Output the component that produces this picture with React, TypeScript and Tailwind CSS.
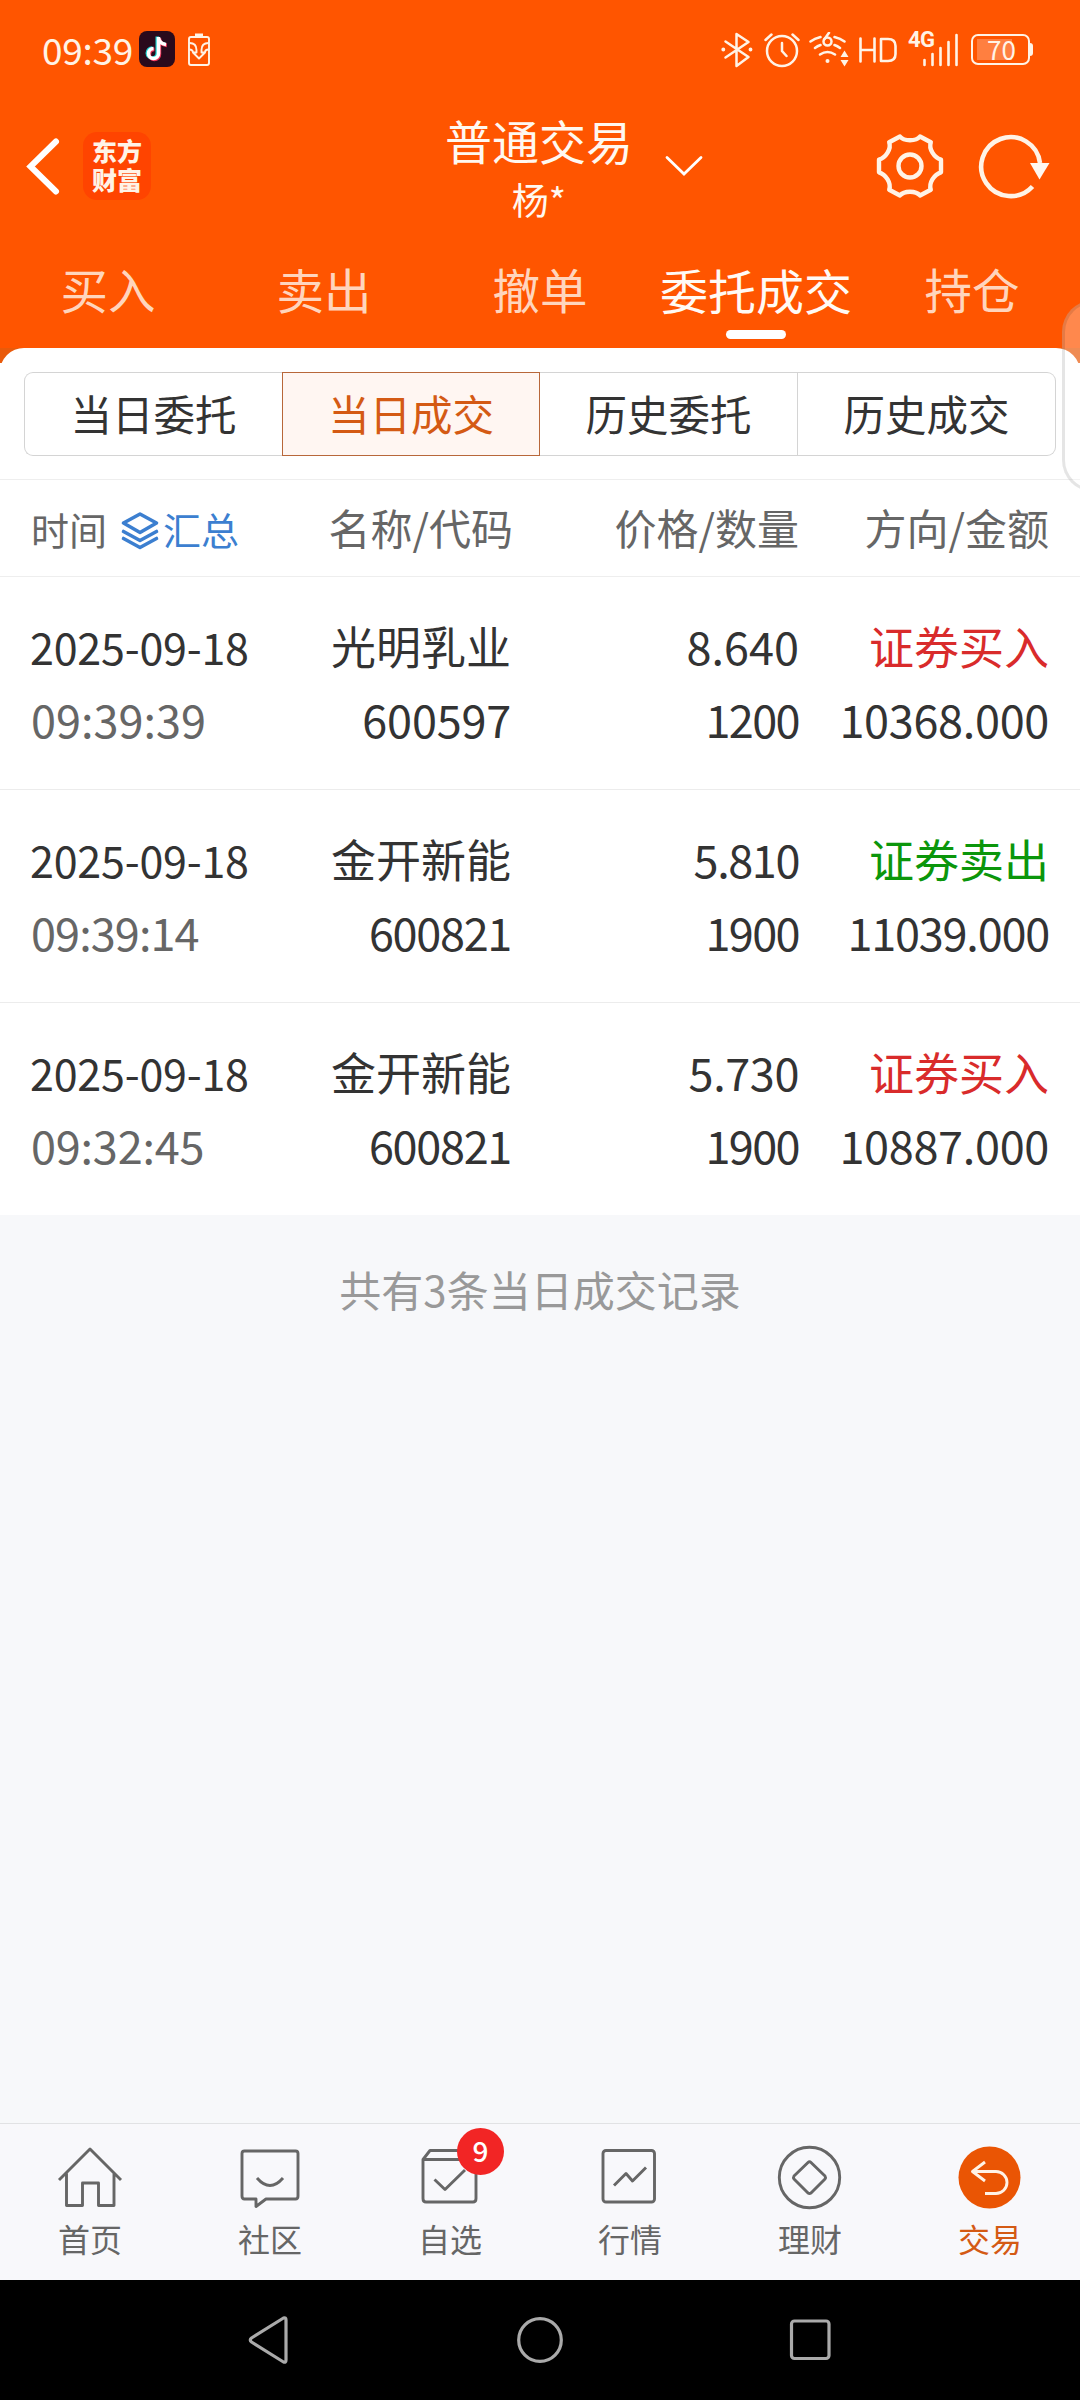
import React from "react";

const records = [
  { date: "2025-09-18", time: "09:39:39", timeTrack: "", name: "光明乳业", code: "600597", codeTrack: "tracking-[-0.2px]", price: "8.640", priceTrack: "", qty: "1200", side: "证券买入", amount: "10368.000", amountTrack: "tracking-[-0.3px]", tone: "text-[#d92b2b]" },
  { date: "2025-09-18", time: "09:39:14", timeTrack: "tracking-[-0.9px]", name: "金开新能", code: "600821", codeTrack: "tracking-[-1.3px]", price: "5.810", priceTrack: "tracking-[-1.4px]", qty: "1900", side: "证券卖出", amount: "11039.000", amountTrack: "tracking-[-1.2px]", tone: "text-[#0b960b]" },
  { date: "2025-09-18", time: "09:32:45", timeTrack: "tracking-[-0.2px]", name: "金开新能", code: "600821", codeTrack: "tracking-[-1.3px]", price: "5.730", priceTrack: "tracking-[-0.4px]", qty: "1900", side: "证券买入", amount: "10887.000", amountTrack: "tracking-[-0.3px]", tone: "text-[#d92b2b]" },
];

const tabs = ["买入", "卖出", "撤单", "委托成交", "持仓"];
const segments = ["当日委托", "当日成交", "历史委托", "历史成交"];

function StatusBar() {
  return (
    <div className="flex h-[100px] items-center pl-[42px] pr-[47px] text-[#fff3e6]">
      <span className="-mt-[3px] w-[97px] whitespace-nowrap text-[37px] leading-[40px] tracking-[-0.3px]">09:39</span>
      <svg className="-mt-[2px] h-9 w-9" viewBox="0 0 36 36">
        <rect width="36" height="36" rx="8" fill="#2a0a1c" />
        <g fill="none" strokeWidth="3.600">
          <path d="M19.500 6V22.500a5 5 0 1 1-5-5M19.500 7c.8 4 3.500 6 7.500 6.500" stroke="#20d5d2" transform="translate(-1.200 -.5)" />
          <path d="M19.500 6V22.500a5 5 0 1 1-5-5M19.500 7c.8 4 3.500 6 7.500 6.500" stroke="#f0365c" transform="translate(.9 .9)" />
          <path d="M19.500 6V22.500a5 5 0 1 1-5-5M19.500 7c.8 4 3.500 6 7.500 6.500" stroke="#fff" />
        </g>
      </svg>
      <svg className="-mt-[1px] ml-3 h-[34px] w-6" viewBox="0 0 24 34" fill="none" stroke="currentColor" strokeWidth="1.900">
        <rect x="2" y="4" width="20" height="28" rx="2" />
        <path d="M8 2h8" strokeWidth="3" />
        <path d="M2.500 10c5 0 7 2.500 7 7v2.500H6l6 6 6-6h-3.500V17c0-4.500 2-7 7-7M2.500 16.500c2 0 3.500 1 3.500 3M21.500 16.500c-2 0-3.500 1-3.500 3" strokeLinejoin="round" />
      </svg>

      <svg className="ml-auto h-9 w-8" viewBox="0 0 32 36" fill="none" stroke="currentColor" strokeWidth="2.500" strokeLinejoin="round" strokeLinecap="round">
        <path d="M4.500 9.500L27.500 25 15.500 34V2l12 8L4.500 25.500" />
        <circle cx="2.300" cy="17.500" r="1.200" fill="currentColor" strokeWidth="1.500" />
        <circle cx="29.500" cy="17.500" r="1.200" fill="currentColor" strokeWidth="1.500" />
      </svg>
      <svg className="ml-[11px] h-9 w-9" viewBox="0 0 36 36" fill="none" stroke="currentColor" strokeWidth="2.500" strokeLinecap="round">
        <circle cx="18" cy="19" r="15" />
        <path d="M18 11v8l4.500 5M1.500 8l6-5.500M34.500 8l-6-5.500" />
      </svg>
      <svg className="ml-[9px] h-9 w-10" viewBox="0 0 40 36" fill="none" stroke="currentColor" strokeWidth="2.500" strokeLinecap="round">
        <path d="M1.500 9.500q4-3 10-4.500M35.500 9.500q-4-3-10-4.500M6 16q2.500-2 5.500-3M31 16q-2.500-2-5.500-3M11 22.500q7.500-5 15 0" />
        <circle cx="18.500" cy="9.500" r="4" />
        <path d="M15.200 7.500L20 0.800" />
        <circle cx="18.500" cy="29" r="2" fill="currentColor" stroke="none" />
        <path d="M31.500 25l4-6.500 4 6.500zM31.500 28l4 6.500 4-6.500z" fill="currentColor" stroke="none" />
      </svg>
      <svg className="ml-[10px] h-[26px] w-[38px]" viewBox="0 0 38 26" fill="none" stroke="currentColor" strokeWidth="2.600" strokeLinecap="round" strokeLinejoin="round">
        <path d="M1.500 1.500v23M15.500 1.500v23M1.500 13h14M22 2h7q7.500 0 7.500 7v8q0 7-7.500 7h-7z" />
      </svg>
      <div className="relative ml-[11px] h-9 w-[52px]">
        <span className="absolute -top-[1px] left-0 font-['Roboto'] text-[22px] font-bold leading-[18px] tracking-[-0.5px]">4G</span>
        <svg className="h-9 w-[52px]" viewBox="0 0 52 36" stroke="currentColor" strokeWidth="2.600" strokeLinecap="round">
          <path d="M16.500 28v5M24.500 22v11M32.500 16v17M40.500 10v23M48.500 3v30" />
        </svg>
      </div>
      <div className="-mt-[2px] ml-[11px] flex items-center">
        <div className="flex h-[31px] w-[59px] items-center rounded-[7px] border-2 border-current p-1">
          <div className="flex h-[21px] w-[35px] items-center justify-center bg-white/25 pl-[14px]">
            <span className="-mt-[2px] text-[26px] leading-[21px]">70</span>
          </div>
        </div>
        <div className="h-[13px] w-[3px] rounded-r bg-current" />
      </div>
    </div>
  );
}

function TitleBar() {
  return (
    <div className="relative flex h-[140px] items-start justify-between pl-[25px] pr-[28px] text-white">
      <div className="flex items-center pt-[32px]">
        <svg className="h-[68px] w-[36px]" viewBox="0 0 36 68" fill="none" stroke="currentColor" strokeWidth="6">
          <path d="M31 9.500L5.500 34.500 31 59.500" strokeLinecap="round" strokeLinejoin="miter" />
        </svg>
        <div className="ml-[22px] flex h-[68px] w-[68px] flex-col items-center justify-center rounded-[14px] bg-[#ff4400] pb-[3px] text-[25px] font-black leading-[29px] text-[#fff3e6]">
          <span>东方</span>
          <span>财富</span>
        </div>
      </div>
      <div className="absolute left-[444px] top-[13px] flex w-[190px] flex-col items-center text-[#fff8f0]">
        <span className="text-[47px] leading-[54px]">普通交易</span>
        <span className="mt-[5px] text-[37px] leading-[54px]">杨*</span>
      </div>
      <svg className="absolute left-[664px] top-[54px] h-6 w-10" viewBox="0 0 40 24" fill="none" stroke="currentColor" strokeWidth="2.800" strokeLinecap="round">
        <path d="M3 3.500L20 20 37 3.500" />
      </svg>
      <div className="flex gap-[32px] pt-[30px]">
        <svg className="h-[72px] w-[72px]" viewBox="-36 -36 72 72" fill="none" stroke="#fff3e6" strokeWidth="4.400" strokeLinejoin="round">
          <path d="M-10-29.500C-6-24.500 6-24.500 10-29.500L20.800-23.700C18.500-17 24-8.500 31-6.300V6.300C24 8.500 18.500 17 20.800 23.700L10 29.500C6 24.500-6 24.500-10 29.500L-20.800 23.700C-18.500 17-24 8.500-31 6.300V-6.300C-24-8.500-18.500-17-20.800-23.700Z" />
          <circle r="11.500" />
        </svg>
        <svg className="h-[72px] w-[74px]" viewBox="0 0 74 72" fill="none" stroke="#fff3e6" strokeWidth="4.600">
          <path d="M54.500 56.500A29.500 29.500 0 1 1 62 33" />
          <path d="M52 33h19.500L61.500 49.500z" fill="#fff8f0" stroke="none" />
        </svg>
      </div>
    </div>
  );
}

function Tabs() {
  return (
    <div className="grid h-[108px] grid-cols-5">
      {tabs.map((t) => (
        <div key={t} className="flex flex-col items-center pt-[21px]">
          <span className={t === "委托成交" ? "whitespace-nowrap text-[48px] leading-[56px] text-[#fffaf5]" : "text-[47.500px] leading-[56px] text-[#ffd5bd]"}>{t}</span>
          {t === "委托成交" && <span className="mt-[13px] h-[9px] w-[60px] rounded-full bg-white" />}
        </div>
      ))}
    </div>
  );
}

function Segments() {
  return (
    <div className="mx-6 mt-[9px] grid h-[84px] grid-cols-4">
      {segments.map((s, i) => (
        <div
          key={s}
          className={
            i === 1
              ? "flex items-center justify-center border border-[#b8673a] bg-[#fff6f2] leading-none text-[#d45a14]"
              : i === 0
                ? "flex items-center justify-center rounded-l-[9px] border border-r-0 border-[#d4d4d4] leading-none text-[#333]"
                : i === 2
                  ? "flex items-center justify-center border-y border-r border-[#d4d4d4] leading-none text-[#333]"
                  : "flex items-center justify-center rounded-r-[9px] border border-l-0 border-[#d4d4d4] leading-none text-[#333]"
          }
        >
          <span className="text-[41.500px]">{s}</span>
        </div>
      ))}
    </div>
  );
}

function Navigation() {
  const items = [
    { label: "首页", art: <path d="M5 38L36 7 67 38M12.500 31.500V63.500H28.500V41H44.500V63.500H60V31.500" /> },
    { label: "社区", art: <><path d="M10.500 9H61.500Q64 9 64 11.500V54Q64 57 61.500 57H32L22 64.500V57H10.500Q8 57 8 54V11.500Q8 9 10.500 9Z" /><path d="M23 36q13 15 26 0" /></> },
    { label: "自选", art: <><path d="M9 17.500H62V56.500Q62 60 59 60H12Q9 60 9 56.500V17.500L16 8.500H55L62 17.500" /><path d="M20.500 37.500L31 47.500 51 28" /></> },
    { label: "行情", art: <><rect x="9" y="8.500" width="51.500" height="51.500" rx="3" /><path d="M20 43.500L32 31.500 38.500 39 52 25.500" /></> },
    { label: "理财", art: <><circle cx="35.500" cy="35.500" r="30.200" /><path d="M34 20.500L20 34Q19 35.500 20 37L34 51Q35.500 52 37 51L51 37Q52 35.500 51 34L37 20.500Q35.500 19 34 20.500Z" /></> },
    { label: "交易", art: <><circle cx="35.500" cy="35.500" r="31" fill="#ea5504" stroke="none" /><path d="M31 20L18.500 29.500 31 39M19 29.500H42a11 11 0 0 1 0 22H31" stroke="#fff3e6" /></> },
  ];
  return (
    <div className="grid h-[157px] grid-cols-6 border-t border-[#e1e2e4] bg-[#f8f8fb]">
      {items.map((it) => (
        <div key={it.label} className={it.label === "交易" ? "relative flex flex-col items-center pt-[18px] text-[#d45a14]" : "relative flex flex-col items-center pt-[18px] text-[#666]"}>
          <svg className="h-[72px] w-[72px]" viewBox="0 0 72 72" fill="none" stroke="currentColor" strokeWidth="2.900" strokeLinejoin="round">{it.art}</svg>
          <span className="mt-[4px] text-[32px] leading-[40px]">{it.label}</span>
          {it.label === "自选" && (
            <span className="absolute left-[97px] top-[4px] flex h-[47px] w-[47px] items-center justify-center rounded-full bg-[#f22525] pb-[3px] text-[28px] font-medium leading-none text-white">9</span>
          )}
        </div>
      ))}
    </div>
  );
}

export default function App() {
  return (
    <div className="relative flex h-[2400px] w-[1080px] flex-col overflow-hidden bg-[#f7f8fa] font-['Noto_Sans_CJK_SC',sans-serif]">
      <header className="bg-[#ff5500]">
        <StatusBar />
        <TitleBar />
        <Tabs />
      </header>
      <div className="h-[15px] overflow-hidden bg-[#e95a0a]">
        <div className="h-[40px] rounded-t-[24px] bg-white" />
      </div>
      <main className="bg-white text-[#333]">
        <Segments />
        <div className="mt-[23px] grid h-[98px] grid-cols-[511px_288px_250px] items-center border-y border-[#eeeeee] text-[42px] leading-none text-[#666]">
          <div className="flex items-center justify-between pl-[31px]">
            <div className="flex items-center pt-[2px] text-[38px]">
              <span>时间</span>
              <svg className="ml-[13px] mt-[3px] h-10 w-10" viewBox="0 0 40 40" fill="none" stroke="#3c7fd0" strokeWidth="3.600" strokeLinejoin="round" strokeLinecap="round">
                <path d="M20 3L36.500 12 20 21.500 3.500 12ZM3.500 20.500L20 29.500 36.500 20.500M3.500 27.500L20 36.500 36.500 27.500" />
              </svg>
              <span className="ml-[3px] text-[#3c7fd0]">汇总</span>
            </div>
            <span className="-mr-[2px] -mt-[2px]">名称/代码</span>
          </div>
          <span className="-mt-[2px] text-right">价格/数量</span>
          <span className="-mt-[2px] text-right">方向/金额</span>
        </div>
        {records.map((r) => (
          <div key={r.time} className="grid h-[213px] grid-cols-[300px_211px_288px_250px] grid-rows-[74px_74px] border-b border-[#ececec] pt-[32px] text-[45px] leading-[74px] last:h-[212px] last:border-b-0">
            <span className="pl-[30px] text-[43px] tracking-[-0.2px]">{r.date}</span>
            <span className="text-right">{r.name}</span>
            <span className={`text-right ${r.priceTrack}`}>{r.price}</span>
            <span className={`text-right ${r.tone}`}>{r.side}</span>
            <span className={`-mt-px pl-[31px] text-[#666] ${r.timeTrack}`}>{r.time}</span>
            <span className={`-mt-px text-right ${r.codeTrack}`}>{r.code}</span>
            <span className="-mt-px text-right tracking-[-1.6px]">{r.qty}</span>
            <span className={`-mt-px text-right ${r.amountTrack}`}>{r.amount}</span>
          </div>
        ))}
      </main>
      <div className="flex-1 pt-[44px] text-center text-[42px] leading-[60px] text-[#999]">共有3条当日成交记录</div>
      <Navigation />
      <div className="flex h-[120px] items-center justify-between bg-black px-[242px]">
        <svg className="h-[54px] w-[54px]" viewBox="0 0 54 54" fill="none" stroke="#aaa" strokeWidth="3.200" strokeLinejoin="round">
          <path d="M41.500 5Q44 4 44 7V47Q44 50 41.500 49L9.500 29Q7 27 9.500 25Z" />
        </svg>
        <svg className="h-[54px] w-[54px]" viewBox="0 0 54 54" fill="none" stroke="#aaa" strokeWidth="3.200">
          <circle cx="27" cy="27" r="21.300" />
        </svg>
        <svg className="h-[54px] w-[54px]" viewBox="0 0 54 54" fill="none" stroke="#aaa" strokeWidth="3.200">
          <rect x="7.500" y="8" width="37.500" height="37.500" rx="3" />
        </svg>
      </div>
      <div className="absolute left-[1062px] top-[300px] h-[192px] w-[64px] rounded-[32px] border-[3px] border-black/10 bg-white/30" />
    </div>
  );
}
